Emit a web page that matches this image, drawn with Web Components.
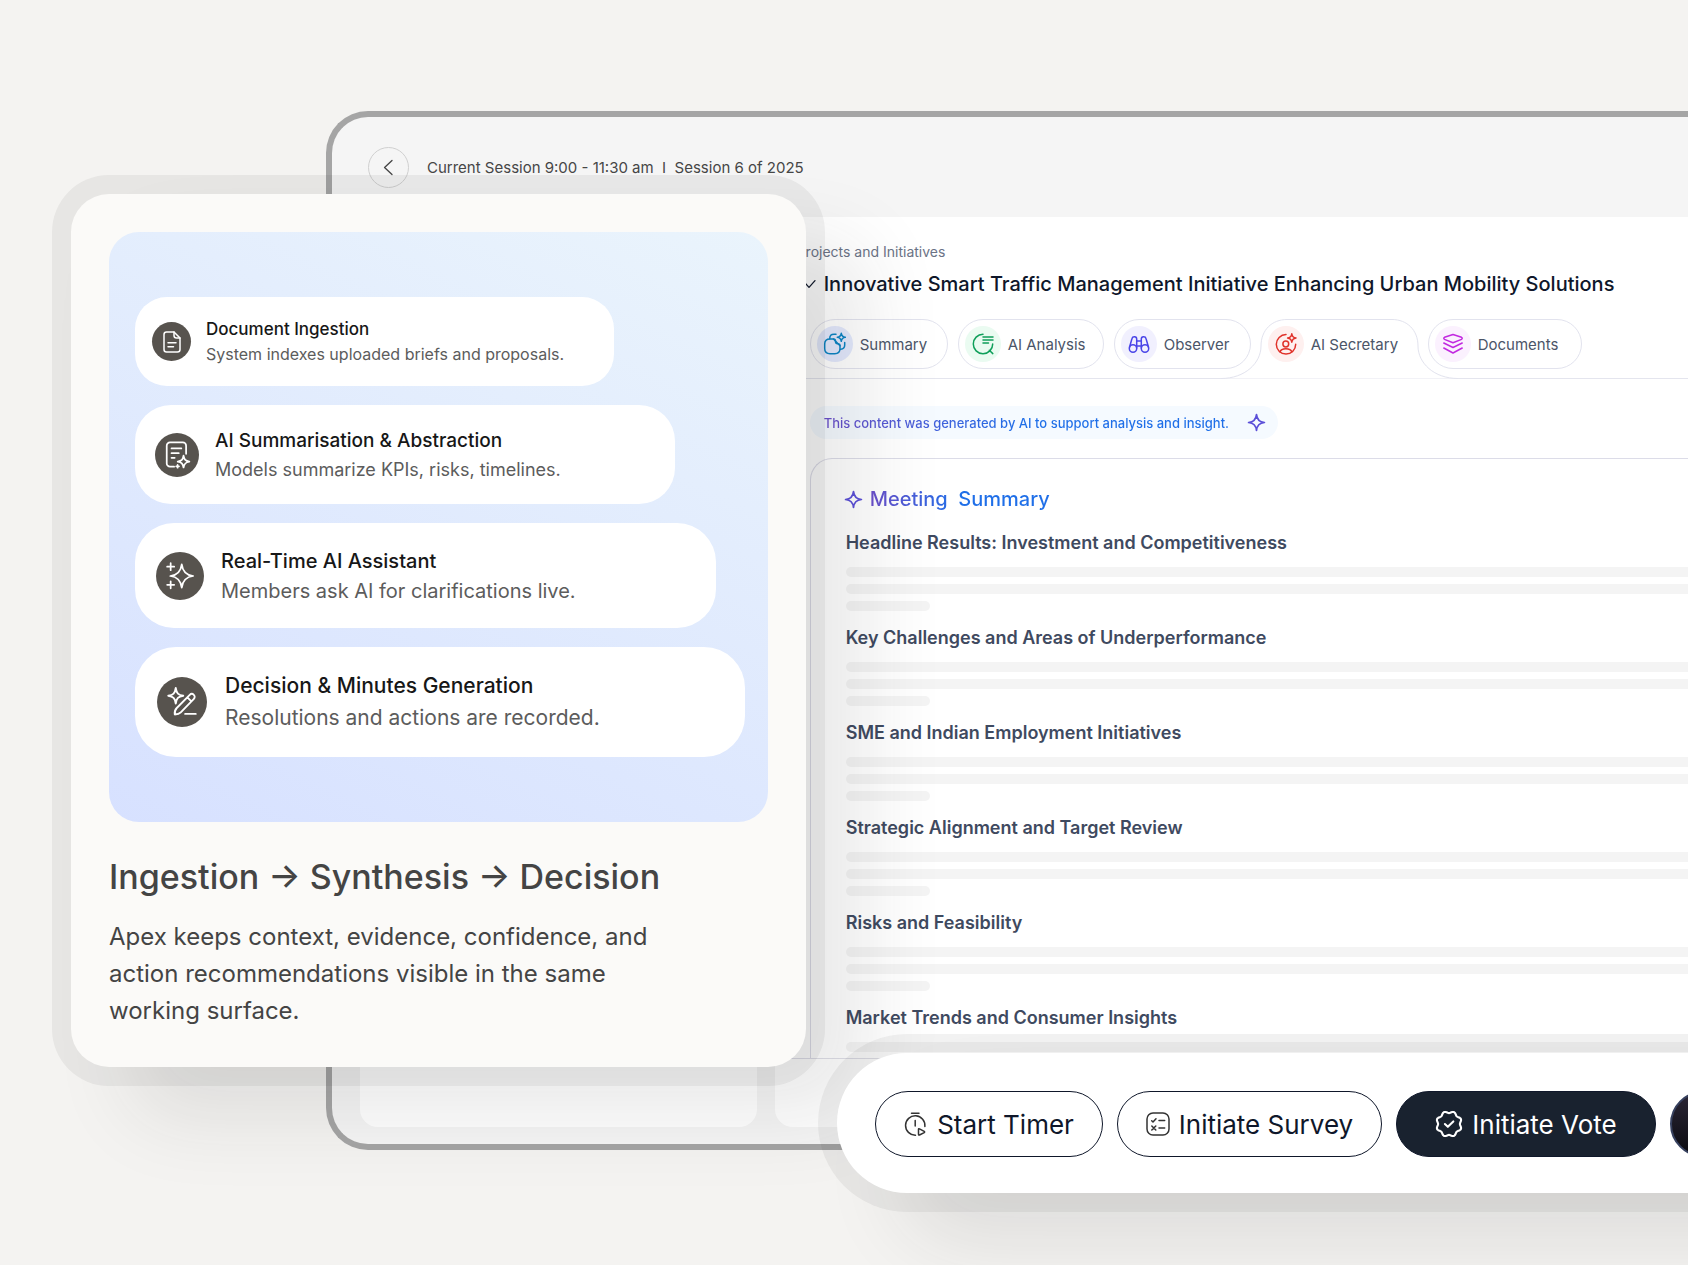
<!DOCTYPE html>
<html lang="en">
<head>
<meta charset="utf-8">
<meta name="viewport" content="width=device-width, initial-scale=1">
<title>Apex session</title>
<style>
    body {
        margin: 0;
        background: #f4f3f1;
        font-family: Inter, "Liberation Sans", sans-serif;
    }
</style>
</head>
<body>

<app-stage>
    <session-window>
        <span slot="session">Current Session 9:00 - 11:30 am&nbsp; I &nbsp;Session 6 of 2025</span>
        <span slot="crumb">Projects and Initiatives</span>
        <span slot="title">Innovative Smart Traffic Management Initiative Enhancing Urban Mobility Solutions</span>

        <tab-pill slot="tabs" icon="summary" style="--tab-width: 138px; --tint: #e3e9fd; --ink: #0a84c4">Summary</tab-pill>
        <tab-pill slot="tabs" icon="analysis" style="--tab-width: 146px; --tint: #eafbf1; --ink: #0f9f5a">AI Analysis</tab-pill>
        <tab-pill slot="tabs" icon="observer" style="--tab-width: 137px; --tint: #f1f0fe; --ink: #4a45e8">Observer</tab-pill>
        <tab-pill slot="tabs" icon="secretary" active style="--tab-width: 157px; --tint: #fef0ef; --ink: #e0322a">AI Secretary</tab-pill>
        <tab-pill slot="tabs" icon="documents" style="--tab-width: 154px; --tint: #fbf1fe; --ink: #c22ae0">Documents</tab-pill>

        <summary-block>Headline Results: Investment and Competitiveness</summary-block>
        <summary-block>Key Challenges and Areas of Underperformance</summary-block>
        <summary-block>SME and Indian Employment Initiatives</summary-block>
        <summary-block>Strategic Alignment and Target Review</summary-block>
        <summary-block>Risks and Feasibility</summary-block>
        <summary-block>Market Trends and Consumer Insights</summary-block>
    </session-window>

    <pipeline-card slot="card">
        <pipeline-step slot="steps" icon="document" size="1">
            Document Ingestion
            <span slot="text">System indexes uploaded briefs and proposals.</span>
        </pipeline-step>
        <pipeline-step slot="steps" icon="abstract" size="2">
            AI Summarisation &amp; Abstraction
            <span slot="text">Models summarize KPIs, risks, timelines.</span>
        </pipeline-step>
        <pipeline-step slot="steps" icon="assistant" size="3">
            Real-Time AI Assistant
            <span slot="text">Members ask AI for clarifications live.</span>
        </pipeline-step>
        <pipeline-step slot="steps" icon="minutes" size="4">
            Decision &amp; Minutes Generation
            <span slot="text">Resolutions and actions are recorded.</span>
        </pipeline-step>
        <span slot="title">Ingestion → Synthesis → Decision</span>
        <span slot="text">Apex keeps context, evidence, confidence, and action recommendations visible in the same working surface.</span>
    </pipeline-card>

    <action-bar slot="actions">
        <action-button icon="timer" style="--button-width: 228px">Start Timer</action-button>
        <action-button icon="survey" style="--button-width: 265px">Initiate Survey</action-button>
        <action-button icon="vote" kind="solid" style="--button-width: 260px">Initiate Vote</action-button>
        <action-button kind="night" label="More actions" style="--button-width: 260px"></action-button>
    </action-bar>
</app-stage>

<script>
const STAR = 'M12 2C12.6 8 16 11.4 22 12C16 12.6 12.6 16 12 22C11.4 16 8 12.6 2 12C8 11.4 11.4 8 12 2Z';

/* Wavy badge ring with eight lobes and a dip at the top */
function badgeRing() {
    const points = [];
    for (let deg = 0; deg < 360; deg += 3) {
        const a = deg * Math.PI / 180;
        const r = 10.2 - 0.85 * Math.cos(8 * a);
        points.push(`${(12 + r * Math.sin(a)).toFixed(2)} ${(12 - r * Math.cos(a)).toFixed(2)}`);
    }
    return `M${points.join('L')}Z`;
}

const ICONS = {
    back: '<path d="M16 4L7.500 12L16 20"/>',
    chevron: '<path d="M3 7L12 17L21 7"/>',
    sparkle: `<path d="${STAR}"/>`,
    document: `<path d="M7 2H14L20 8V19.5A2.5 2.5 0 0 1 17.5 22H6.5A2.5 2.5 0 0 1 4 19.5V4.5A2.5 2.5 0 0 1 6.5 2H7"/>
        <path d="M14 2V5.500A2.500 2.500 0 0 0 16.500 8H20M8 12.700H16M8 16.700H13.500"/>`,
    abstract: `<path d="M9.500 22H6A2.800 2.800 0 0 1 3.200 19.200V4A2.800 2.800 0 0 1 6 1.200H17A2.800 2.800 0 0 1 19.800 4V11"/>
        <path d="M7.300 6.400H15.700M7.300 10.400H13.500M7.300 14.400H10"/>
        <path d="M17.600 12.500C18.200 16 19.300 17 22.600 17.600C19.300 18.200 18.200 19.300 17.600 22.700C17 19.300 16 18.200 12.600 17.600C16 17 17 16 17.600 12.500Z"/>
        <path d="M12.500 20.500V22.900M11.300 21.700H13.700"/>`,
    assistant: `<path d="M13.500 2C14.300 8.500 17.300 11.300 23.300 12C17.300 12.700 14.300 15.500 13.500 22C12.700 15.500 9.700 12.700 3.700 12C9.700 11.300 12.700 8.500 13.500 2Z"/>
        <path d="M4 1V7M1 4H7M4 16.500V22.500M1 19.500H7"/>`,
    minutes: `<path d="M7 .8C7.600 5 9 6.400 13 7C9 7.600 7.600 9 7 13.200C6.400 9 5 7.600 1 7C5 6.400 6.400 5 7 .8Z"/>
        <path d="M18.200 6.300A2.200 2.200 0 0 1 21.500 9.500L11 20.300Q9.500 22 6.200 22Q5.800 19 7.800 16.800ZM16.300 8.300L19.500 11.500M14.500 21.500H23"/>`,
    summary: `<path d="M10.500 7H7C3.500 7 1.700 8.500 1.700 12V16.500C1.700 20 3.500 21.700 7 21.700H11.700C15.200 21.700 17 20 17 16.500V13.700Z"/>
        <path d="M10.500 7C12 7 12.500 8 12.500 9.500C12.500 11 13.300 11.700 14.700 11.700C16.300 11.700 17 12.300 17 13.700"/>
        <path d="M6.700 6.800C6.700 3.500 8 2.300 11 2.300H13M21.700 10.500V13C21.700 15.800 20.500 17 17.700 17.300"/>
        <path d="M18.300 1.300C18.700 4 19.600 4.900 22.300 5.300C19.600 5.700 18.700 6.600 18.300 9.300C17.900 6.600 17 5.700 14.300 5.300C17 4.900 17.900 4 18.300 1.300Z"/>`,
    analysis: '<path d="M12 2.300A9.700 9.700 0 1 0 21.700 12M18.300 18.300L21.800 21.600M12 5H22M12 8H22M12 11H17.500"/>',
    observer: `<circle cx="6" cy="16.500" r="3.700"/><circle cx="18" cy="16.500" r="3.700"/>
        <path d="M2.500 15.200L5 6.500C5.600 4 9.700 4 9.700 7V16M21.500 15.200L19 6.500C18.400 4 14.300 4 14.300 7V16M9.700 9H14.300M9.700 14H14.300"/>`,
    secretary: `<path d="M12 2.600A9.700 9.700 0 1 0 21.700 12.300"/><circle cx="11.800" cy="12" r="2.900"/>
        <path d="M6 20C6.800 17.300 9.500 16.800 11.800 16.800S17 17.300 17.800 20"/>
        <path d="M17.800 1.800C18.200 4.700 19.200 5.600 22 6C19.200 6.400 18.200 7.300 17.800 10.200C17.400 7.300 16.400 6.400 13.600 6C16.400 5.600 17.400 4.700 17.800 1.800Z"/>`,
    documents: `<path d="M12 2.500L20.500 5.300Q22 6.300 20.500 7.400L12 10.800L3.500 7.400Q2 6.300 3.500 5.300Z"/>
        <path d="M2.800 11L12 15.500L21.200 11M2.800 16L12 21L21.200 16"/>`,
    timer: `<path d="M11.500 23.200A9.700 9.700 0 1 1 20.900 14.500M7.500 1.200H15M11.200 8.500V14"/>
        <path d="M14.500 17.300Q14.500 16.300 15.500 16.800L20.200 19.300Q21 20 20.200 20.700L15.500 23Q14.500 23.400 14.500 22.300Z"/>`,
    survey: `<rect x="1" y="1" width="22" height="22" rx="6"/>
        <path d="M5.700 8.700L7 10L10 6.700M13 8.500H18.700M13 16H18.700M5.800 14L9.800 18M9.800 14L5.800 18"/>`,
    vote: `<path d="${badgeRing()}"/><path d="M8.500 12L11 14.400L15.700 9.800"/>`
};

/* Shared base: every element renders its own template into an open root */
class AppElement extends HTMLElement {
    constructor() {
        super();
        const shadow = this.attachShadow({ mode: 'open' });
        const template = document.createElement('template');
        template.innerHTML = this.render();
        shadow.appendChild(template.content.cloneNode(true));
    }
}

class AppIcon extends AppElement {
    render() {
        return `
            <style>
                :host { display: block; flex: none; width: var(--icon-size, 24px); height: var(--icon-size, 24px); }
                svg {
                    display: block;
                    width: 100%;
                    height: 100%;
                    overflow: visible;
                    fill: none;
                    stroke: currentColor;
                    stroke-width: var(--icon-stroke, 1.5);
                    stroke-linecap: round;
                    stroke-linejoin: round;
                }
            </style>
            <svg viewBox="0 0 24 24" aria-hidden="true">${ICONS[this.getAttribute('name')]}</svg>
        `;
    }
}

class AppStage extends AppElement {
    render() {
        return `
            <style>
                :host {
                    display: block;
                    position: relative;
                    box-sizing: border-box;
                    min-height: 100vh;
                    padding: 111px 0 115px 326px;
                    overflow: hidden;
                    --float-shadow: 0 0 0 19px rgba(40, 40, 40, 0.06), 60px 50px 80px rgba(40, 38, 35, 0.1);
                }
                /* Both panels float over the session window */
                ::slotted(pipeline-card) { position: absolute; top: 194px; left: 71px; width: 43.54vw; }
                ::slotted(action-bar) { position: absolute; top: 1053px; left: 837px; right: -160px; }
            </style>
            <slot></slot>
            <slot name="card"></slot>
            <slot name="actions"></slot>
        `;
    }
}

class SessionWindow extends AppElement {
    render() {
        return `
            <style>
                :host {
                    display: block;
                    border: 6px solid #a5a5a5;
                    border-right: 0;
                    border-radius: 42px 0 0 42px;
                    background: #f5f5f5;
                    padding: 30px 0 17px 28px;
                }
                header { display: flex; align-items: center; gap: 18px; padding-left: 8px; height: 41px; margin-bottom: 29px; color: #464646; font-size: 15px; }
                .back {
                    display: grid;
                    place-items: center;
                    width: 41px;
                    height: 41px;
                    padding: 0;
                    border: 1px solid #d0d0d0;
                    border-radius: 50%;
                    background: none;
                    color: #444;
                    --icon-size: 21px;
                }
                .columns { display: grid; grid-template-columns: 23.5vw minmax(0, 1fr); gap: 18px; }
                aside, main { background: #fff; border-radius: 18px; }
                main { border-radius: 18px 0 0 18px; padding-bottom: 68px; }
                .heading { padding: 25px 0 0 22px; }
                .crumb { color: #6b7386; font-size: 14px; line-height: 20px; }
                .title { display: flex; align-items: center; gap: 7px; margin-top: 9px; padding-left: 4px; color: #0f172a; --icon-size: 16px; --icon-stroke: 2; }
                h1 { margin: 0; font-size: 20px; line-height: 26px; font-weight: 500; white-space: nowrap; }
                nav { display: flex; gap: 10px; padding: 22px 0 9px 35px; border-bottom: 1px solid #e4e5ee; }
                .body { padding: 27px 0 0 35px; height: 652px; overflow: hidden; border-bottom: 1px solid #dfdfe8; }
                .note {
                    display: inline-flex;
                    align-items: center;
                    gap: 18px;
                    height: 33px;
                    padding: 0 12px 0 14px;
                    border-radius: 17px;
                    background: #f5faff;
                    font-size: 13px;
                    font-weight: 500;
                    color: #5b4fd8;
                    --icon-size: 19px;
                    --icon-stroke: 2.2;
                }
                .fade {
                    color: transparent;
                    background: linear-gradient(90deg, #6c4fcb, #1f6fe8 50%);
                    background-clip: text;
                    -webkit-background-clip: text;
                }
                .box {
                    margin-top: 19px;
                    padding: 26px 0 0 35px;
                    border: 1px solid #dcdce8;
                    border-right: 0;
                    border-radius: 22px 0 0 0;
                    height: 660px;
                }
                h2 { display: flex; align-items: center; gap: 7px; margin: 0 0 16px -2px; font-size: 20px; line-height: 28px; font-weight: 500; color: #5b4fd8; --icon-size: 19px; --icon-stroke: 2.2; }
                h2 .fade { white-space: pre; }
            </style>
            <header>
                <button class="back" type="button" aria-label="Back"><app-icon name="back"></app-icon></button>
                <slot name="session"></slot>
            </header>
            <div class="columns">
                <aside></aside>
                <main>
                    <div class="heading">
                        <div class="crumb"><slot name="crumb"></slot></div>
                        <div class="title"><app-icon name="chevron"></app-icon><h1><slot name="title"></slot></h1></div>
                    </div>
                    <nav><slot name="tabs"></slot></nav>
                    <div class="body">
                        <div class="note">
                            <span class="fade">This content was generated by AI to support analysis and insight.</span>
                            <app-icon name="sparkle"></app-icon>
                        </div>
                        <section class="box">
                            <h2><app-icon name="sparkle"></app-icon><span class="fade">Meeting  Summary</span></h2>
                            <slot></slot>
                        </section>
                    </div>
                </main>
            </div>
        `;
    }
}

class TabPill extends AppElement {
    render() {
        const active = this.hasAttribute('active');
        return `
            <style>
                :host { display: block; flex: none; width: var(--tab-width, auto); position: relative; }
                button {
                    position: relative;
                    display: flex;
                    align-items: center;
                    gap: 7px;
                    box-sizing: border-box;
                    width: 100%;
                    height: 50px;
                    padding: 0 0 0 6px;
                    border: 1px solid ${active ? 'transparent' : '#e2e3ee'};
                    border-radius: 25px;
                    background: ${active ? 'none' : '#fff'};
                    color: #4b5568;
                    font: inherit;
                    font-size: 15px;
                    white-space: nowrap;
                }
                .disc { display: grid; place-items: center; flex: none; width: 36px; height: 36px; border-radius: 50%; background: var(--tint); color: var(--ink); }
                /* Raised tab outline that flows into the rule under the tabs */
                .shape { position: absolute; top: 0; left: -40px; width: 237px; height: 60px; fill: #fff; stroke: #e2e3ee; }
            </style>
            ${active ? '<svg class="shape" viewBox="0 0 237 60" aria-hidden="true"><path d="M0 59.500C24 59.500 40 44 40 27C40 11 51 .5 66 .5H171C186 .5 197 11 197 27C197 44 213 59.500 237 59.500"/></svg>' : ''}
            <button type="button" ${active ? 'aria-current="page"' : ''}>
                <span class="disc"><app-icon name="${this.getAttribute('icon')}"></app-icon></span>
                <slot></slot>
            </button>
        `;
    }
}

class SummaryBlock extends AppElement {
    render() {
        return `
            <style>
                :host { display: block; margin-bottom: 13px; }
                h3 { margin: 0 0 11px; color: #3f4a60; font-size: 18px; line-height: 27px; font-weight: 600; }
                .lines { display: grid; gap: 7px; }
                .lines i { height: 10px; border-radius: 5px 0 0 5px; background: #f4f4f4; }
                .lines i:last-child { width: 84px; border-radius: 5px; }
            </style>
            <h3><slot></slot></h3>
            <div class="lines"><i></i><i></i><i></i></div>
        `;
    }
}

class PipelineCard extends AppElement {
    render() {
        return `
            <style>
                :host {
                    display: block;
                    box-sizing: border-box;
                    padding: 38px;
                    border-radius: 38px;
                    background: #fbfaf8;
                    box-shadow: var(--float-shadow);
                    color: #444;
                }
                .steps {
                    display: flex;
                    flex-direction: column;
                    gap: 19px;
                    padding: 65px 23px 65px 26px;
                    border-radius: 30px;
                    background: linear-gradient(205deg, #eaf4fc, #d7e1ff);
                }
                h2 { margin: 32px 0 0; font-size: 34px; line-height: 46px; font-weight: 500; white-space: nowrap; }
                p { margin: 18px 0 0; padding-right: 100px; font-size: 24px; line-height: 37px; }
            </style>
            <div class="steps"><slot name="steps"></slot></div>
            <h2><slot name="title"></slot></h2>
            <p><slot name="text"></slot></p>
        `;
    }
}

/* width, height, radius, left padding, disc, icon, gap, title size, text size, line height */
const STEP_SIZES = {
    1: ['78.5%', 89, 32, 17, 39, 24, 15, 17, 16, 25],
    2: ['88.5%', 99, 36, 20, 44, 28, 16, 19, 18, 29],
    3: ['95.2%', 105, 39, 21, 48, 28, 17, 20, 20, 30],
    4: ['100%', 110, 41, 22, 50, 30, 18, 21, 21, 32]
};

class PipelineStep extends AppElement {
    render() {
        const [width, height, radius, pad, disc, icon, gap, title, text, line] = STEP_SIZES[this.getAttribute('size')];
        return `
            <style>
                :host {
                    display: flex;
                    align-items: center;
                    gap: ${gap}px;
                    box-sizing: border-box;
                    width: ${width};
                    min-height: ${height}px;
                    padding-left: ${pad}px;
                    border-radius: ${radius}px;
                    background: #fff;
                    white-space: nowrap;
                    line-height: ${line}px;
                }
                .disc { display: grid; place-items: center; flex: none; width: ${disc}px; height: ${disc}px; border-radius: 50%; background: #57534e; color: #fff; --icon-size: ${icon}px; }
                h3 { margin: 0; color: #171717; font-size: ${title}px; font-weight: 500; }
                div { color: #5c5c5c; font-size: ${text}px; }
            </style>
            <span class="disc"><app-icon name="${this.getAttribute('icon')}"></app-icon></span>
            <article>
                <h3><slot></slot></h3>
                <div><slot name="text"></slot></div>
            </article>
        `;
    }
}

class ActionBar extends AppElement {
    render() {
        return `
            <style>
                :host {
                    display: flex;
                    gap: 14px;
                    box-sizing: border-box;
                    padding: 38px 38px 36px;
                    border-radius: 70px;
                    background: #fff;
                    box-shadow: var(--float-shadow);
                }
            </style>
            <slot></slot>
        `;
    }
}

class ActionButton extends AppElement {
    render() {
        const icon = this.getAttribute('icon');
        const label = this.getAttribute('label');
        return `
            <style>
                :host { display: block; flex: none; width: var(--button-width, auto); }
                button {
                    display: flex;
                    align-items: center;
                    justify-content: center;
                    gap: 9px;
                    box-sizing: border-box;
                    width: 100%;
                    height: 66px;
                    padding: 0;
                    border: 1px solid #0f172a;
                    border-radius: 33px;
                    background: #fff;
                    color: #0f172a;
                    font: inherit;
                    font-size: 26px;
                    white-space: nowrap;
                }
                app-icon { color: #333; }
                :host([kind="solid"]) button { background: #19222f; color: #fff; }
                :host([kind="solid"]) app-icon { color: #fff; --icon-size: 28px; --icon-stroke: 1.8; }
                :host([kind="night"]) button { border: 2px solid #37415f; background: linear-gradient(#2b2636, #0b0b10); }
            </style>
            <button type="button" ${label ? `aria-label="${label}"` : ''}>
                ${icon ? `<app-icon name="${icon}"></app-icon>` : ''}
                <slot></slot>
            </button>
        `;
    }
}

customElements.define('app-icon', AppIcon);
customElements.define('app-stage', AppStage);
customElements.define('session-window', SessionWindow);
customElements.define('tab-pill', TabPill);
customElements.define('summary-block', SummaryBlock);
customElements.define('pipeline-card', PipelineCard);
customElements.define('pipeline-step', PipelineStep);
customElements.define('action-bar', ActionBar);
customElements.define('action-button', ActionButton);
</script>
</body>
</html>
